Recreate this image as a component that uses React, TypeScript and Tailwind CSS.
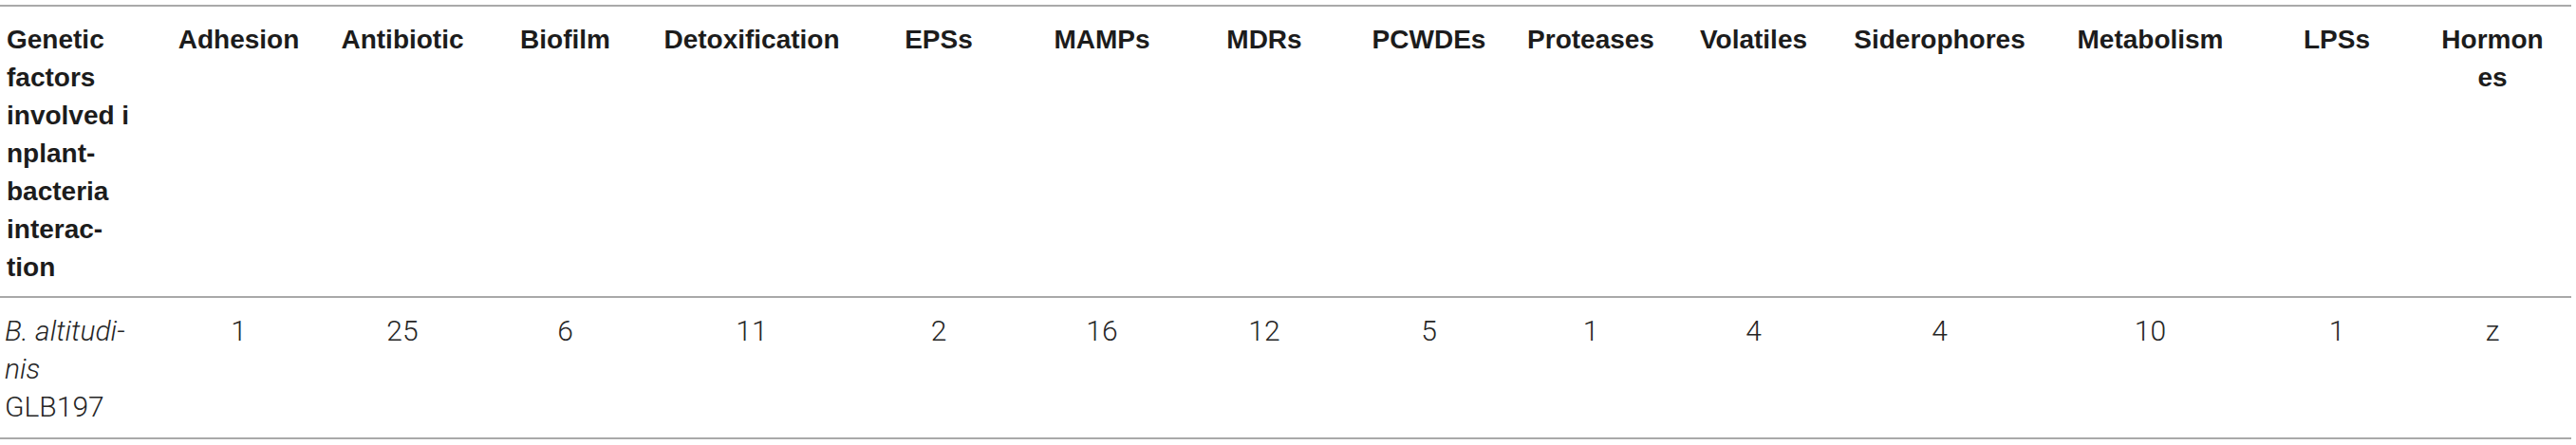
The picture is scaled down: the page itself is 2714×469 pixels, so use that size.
const headers = [
  "Adhesion",
  "Antibiotic",
  "Biofilm",
  "Detoxification",
  "EPSs",
  "MAMPs",
  "MDRs",
  "PCWDEs",
  "Proteases",
  "Volatiles",
  "Siderophores",
  "Metabolism",
  "LPSs",
];

const values = ["1", "25", "6", "11", "2", "16", "12", "5", "1", "4", "4", "10", "1", "z"];

const grid =
  "grid grid-cols-[165px_173px_172px_171px_222px_172px_172px_170px_177px_164px_179px_213px_231px_162px_166px]";

export default function App() {
  return (
    <div className="w-[2714px] h-[469px] bg-white pt-[5px]">
      <div className="w-[2709px] border-t-2 border-b-2 border-[#a9a9a9]">
        {/* header */}
        <div
          className={`${grid} pt-[15px] pb-[10px] text-[28px] leading-[40px] font-bold text-[#1c1c1c]`}
          style={{ fontFamily: '"Liberation Sans", Arial, sans-serif' }}
        >
          <div className="pl-[7px] whitespace-nowrap">
            Genetic
            <br />
            factors
            <br />
            involved i
            <br />
            nplant-
            <br />
            bacteria
            <br />
            interac-
            <br />
            tion
          </div>
          {headers.map((h) => (
            <div key={h} className="text-center whitespace-nowrap">
              {h}
            </div>
          ))}
          <div className="text-center whitespace-nowrap">
            Hormon
            <br />
            es
          </div>
        </div>

        {/* data row */}
        <div
          className={`${grid} border-t-2 border-[#a9a9a9] pt-[15px] pb-[12px] text-[30px] leading-[40px] font-light text-[#262626]`}
          style={{ fontFamily: 'Roboto, "Liberation Sans", sans-serif' }}
        >
          <div className="pl-[5px] whitespace-nowrap">
            <i>B. altitudi-</i>
            <br />
            <i>nis</i>
            <br />
            GLB197
          </div>
          {values.map((v, i) => (
            <div key={i} className="text-center">
              {v}
            </div>
          ))}
        </div>
      </div>
    </div>
  );
}
